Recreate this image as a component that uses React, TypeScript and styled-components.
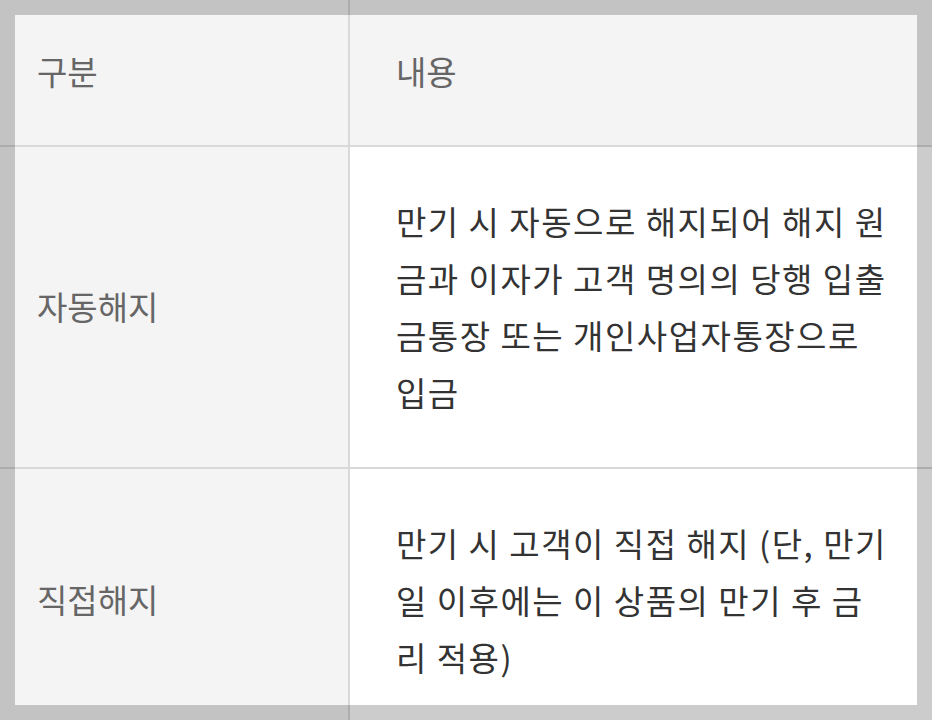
import styled, { createGlobalStyle } from "styled-components";

const GlobalStyle = createGlobalStyle`
  html, body {
    margin: 0;
    padding: 0;
    background: #ffffff;
    overflow: hidden;
  }
  body {
    font-family: "Noto Sans CJK KR", "Noto Sans", sans-serif;
  }
`;

const Page = styled.div`
  width: 932px;
  height: 720px;
  overflow: hidden;
  position: relative;
  background: #ffffff;
`;

const Table = styled.table`
  width: 100%;
  border-collapse: collapse;
  table-layout: fixed;
`;

const Row = styled.tr`
  border-bottom: 2px solid #d9d9d9;
`;

const LabelCell = styled.th`
  width: 349px;
  box-sizing: border-box;
  padding: 43px 20px 45px 37px;
  background: #f4f4f4;
  border-right: 2px solid #d9d9d9;
  color: #666666;
  font-size: 33px;
  font-weight: 400;
  line-height: 57px;
  text-align: left;
  vertical-align: middle;
`;

const ContentCell = styled.td<{ $head?: boolean }>`
  padding: ${(p) => (p.$head ? "43px 40px 45px 46px" : "46px 40px 46px 46px")};
  background: ${(p) => (p.$head ? "#f4f4f4" : "#ffffff")};
  color: ${(p) => (p.$head ? "#666666" : "#333333")};
  font-size: 33px;
  font-weight: 400;
  line-height: 57px;
  letter-spacing: ${(p) => (p.$head ? "0" : "1.5px")};
  text-align: left;
  vertical-align: middle;
  word-break: break-all;
`;

// dimmed frame laid over the table edges
const Dim = styled.div`
  position: absolute;
  inset: 0;
  border: 15px solid rgba(0, 0, 0, 0.2);
  pointer-events: none;
`;

const rows = [
  {
    label: "자동해지",
    text: "만기 시 자동으로 해지되어 해지 원금과 이자가 고객 명의의 당행 입출금통장 또는 개인사업자통장으로 입금",
  },
  {
    label: "직접해지",
    text: "만기 시 고객이 직접 해지 (단, 만기일 이후에는 이 상품의 만기 후 금리 적용)",
  },
];

export default function App() {
  return (
    <Page>
      <GlobalStyle />
      <Table>
        <tbody>
          <Row>
            <LabelCell>구분</LabelCell>
            <ContentCell $head>내용</ContentCell>
          </Row>
          {rows.map((r) => (
            <Row key={r.label}>
              <LabelCell>{r.label}</LabelCell>
              <ContentCell>{r.text}</ContentCell>
            </Row>
          ))}
        </tbody>
      </Table>
      <Dim />
    </Page>
  );
}
